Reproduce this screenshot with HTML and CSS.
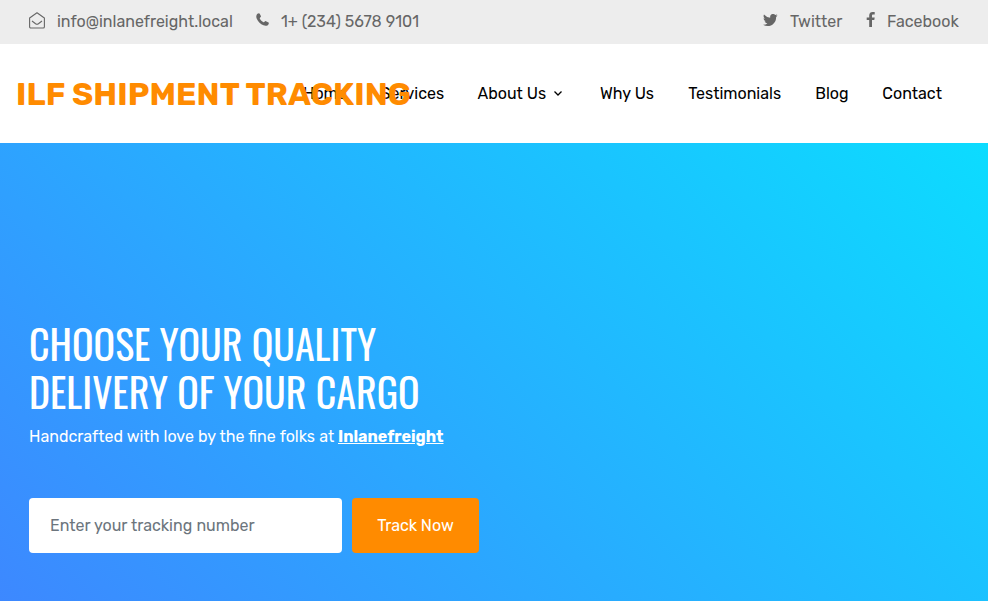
FILE: index.html
```html
<!DOCTYPE html>
<html lang="en">
<head>
<meta charset="utf-8">
<title>ILF Shipment Tracking</title>
<link rel="stylesheet" href="styles.css">
</head>
<body>
<div class="topbar">
  <a class="contact mail">
    <svg class="icon" width="16" height="17" viewBox="0 0 16 17" fill="none" stroke="#666" stroke-width="1.1" stroke-linejoin="round"><path d="M.6 6 8 .8 15.400 6V14.700Q15.400 16 14.200 16H1.800Q.6 16 .6 14.700Z"/><path d="M3 9 6.600 11.700Q8 12.700 9.400 11.700L13 9"/></svg>
    <span class="label">info@inlanefreight.local</span>
  </a>
  <a class="contact phone">
    <svg class="icon" width="13" height="13" viewBox="0 0 13 13" fill="#666"><path d="M.5 2.200C.8 1 1.900.3 2.900.2 3.300.1 3.500.4 3.700.8L4.900 3C5.100 3.500 4.900 3.800 4.500 4.200 4 4.700 3.500 5 3.800 5.500 4.700 7.200 5.900 8.400 7.500 9.200 8 9.500 8.300 9.100 8.700 8.600 9.200 8 9.500 7.900 10 8.200L12.500 9.500C12.900 9.700 12.900 10 12.800 10.400 12.500 11.500 11.900 12.300 10.500 12.700 9.500 13 8.500 12.700 7.500 12.300 4.400 11.100 2.200 8.900.9 6 .3 4.600.1 3.400.5 2.200Z"/></svg>
    <span class="label">1+ (234) 5678 9101</span>
  </a>
  <a class="contact twitter">
    <svg class="icon" width="15" height="12" viewBox="0 0 15 12" fill="#666"><path d="M14.600 1.400Q14 2.300 13.100 3C13.300 8 9.500 12 4.700 12Q2.200 12 0 10.700 2.500 10.900 4.400 9.400 2.300 9.200 1.600 7.300 2.300 7.400 2.900 7.200.6 6.500.5 4.200 1.200 4.500 1.900 4.600-.2 3 1 .6 3.500 3.600 7.200 3.700C6.500.3 10.200-1.200 12.300 1Q13.300.8 14.200.3 13.900 1.300 12.900 1.900 13.800 1.800 14.600 1.400Z"/></svg>
    <span class="label">Twitter</span>
  </a>
  <a class="contact facebook">
    <svg class="icon" width="9" height="15" viewBox="-.7 0 9 15" fill="#666"><path d="M8 .1V2.500H6.600C5.500 2.500 5.300 3 5.300 3.800V5.400H8L7.600 8.100H5.300V15H2.500V8.100H0V5.400H2.500V3.400C2.500 1.200 3.900 0 5.900 0 6.800 0 7.700.1 8 .1Z"/></svg>
    <span class="label">Facebook</span>
  </a>
</div>
<header class="navbar">
  <nav class="menu">
    <a class="home">Home</a>
    <a class="services">Services</a>
    <a class="about">About Us</a>
    <svg class="chevron" width="8" height="5" viewBox="0 0 8 5" fill="none" stroke="#000" stroke-width="1.300"><path d="M.5.5 4 4 7.500.5"/></svg>
    <a class="why">Why Us</a>
    <a class="testimonials">Testimonials</a>
    <a class="blog">Blog</a>
    <a class="contact-link">Contact</a>
  </nav>
  <div class="brand">ILF SHIPMENT TRACKING</div>
</header>
<main class="hero">
  <h1 class="headline"><span class="line">CHOOSE YOUR QUALITY</span><span class="line">DELIVERY OF YOUR CARGO</span></h1>
  <p class="credit"><span class="intro">Handcrafted with love by the fine folks at</span><a class="company">Inlanefreight</a></p>
  <form class="tracking">
    <input class="number" type="text" placeholder="Enter your tracking number">
    <button class="submit" type="button">Track Now</button>
  </form>
</main>
</body>
</html>
```
FILE: styles.css
```css
* { box-sizing: border-box; }
html { background: #fff; overflow: hidden; }
body {
  margin: 0;
  width: 988px;
  height: 601px;
  display: flex;
  flex-direction: column;
  font: 16px/24px Rubik, Roboto, sans-serif;
  color: #000;
  white-space: nowrap;
}
.topbar {
  height: 44px;
  padding: 10px 29px 0;
  display: flex;
  align-items: flex-start;
  background: #ededed;
  color: #666;
}
.contact { display: flex; }
.icon { display: block; margin-top: 2px; flex: none; }
.mail { width: 227px; gap: 12px; }
.phone { gap: 12px; }
.phone .icon { margin-top: 3px; }
.twitter { margin-left: auto; width: 103px; gap: 12px; }
.twitter .icon { margin-top: 4px; }
.facebook { width: 93px; gap: 12px; }
.navbar {
  height: 99px;
  display: grid;
  align-items: center;
  background: #fff;
}
.menu, .brand { grid-area: 1 / 1; }
.menu { display: flex; align-items: center; padding-left: 303px; }
.home { width: 77.500px; }
.services { width: 97px; }
.about { width: 76px; }
.chevron { width: 8px; margin-right: 38.500px; }
.why { width: 88.300px; }
.testimonials { width: 127px; }
.blog { width: 67px; }
.brand {
  padding-left: 16px;
  font-size: 32px;
  line-height: 38px;
  font-weight: 700;
  letter-spacing: .1px;
  color: #ff8b00;
}
.hero {
  flex: 1;
  padding: 176px 29px 0;
  background: linear-gradient(45deg, #3d88ff 0%, #0cdcff 100%);
  color: #fff;
}
.headline {
  margin: 0;
  font: 400 40px/48px Oswald, Roboto, sans-serif;
}
.line { display: block; }
.credit { margin: 10px 0 49px; display: flex; }
.intro { width: 309px; word-spacing: .25px; }
.company { font-weight: 700; text-decoration: underline; }
.tracking { display: flex; gap: 10px; margin: 0; }
.number, .submit {
  height: 55px;
  border: 0;
  border-radius: 4px;
  font: inherit;
}
.number { width: 313px; padding: 0 21px; background: #fff; }
.number::placeholder { color: #6c757d; opacity: 1; word-spacing: .3px; }
.submit { width: 127px; padding: 0; background: #ff8b00; color: #fff; }
```
